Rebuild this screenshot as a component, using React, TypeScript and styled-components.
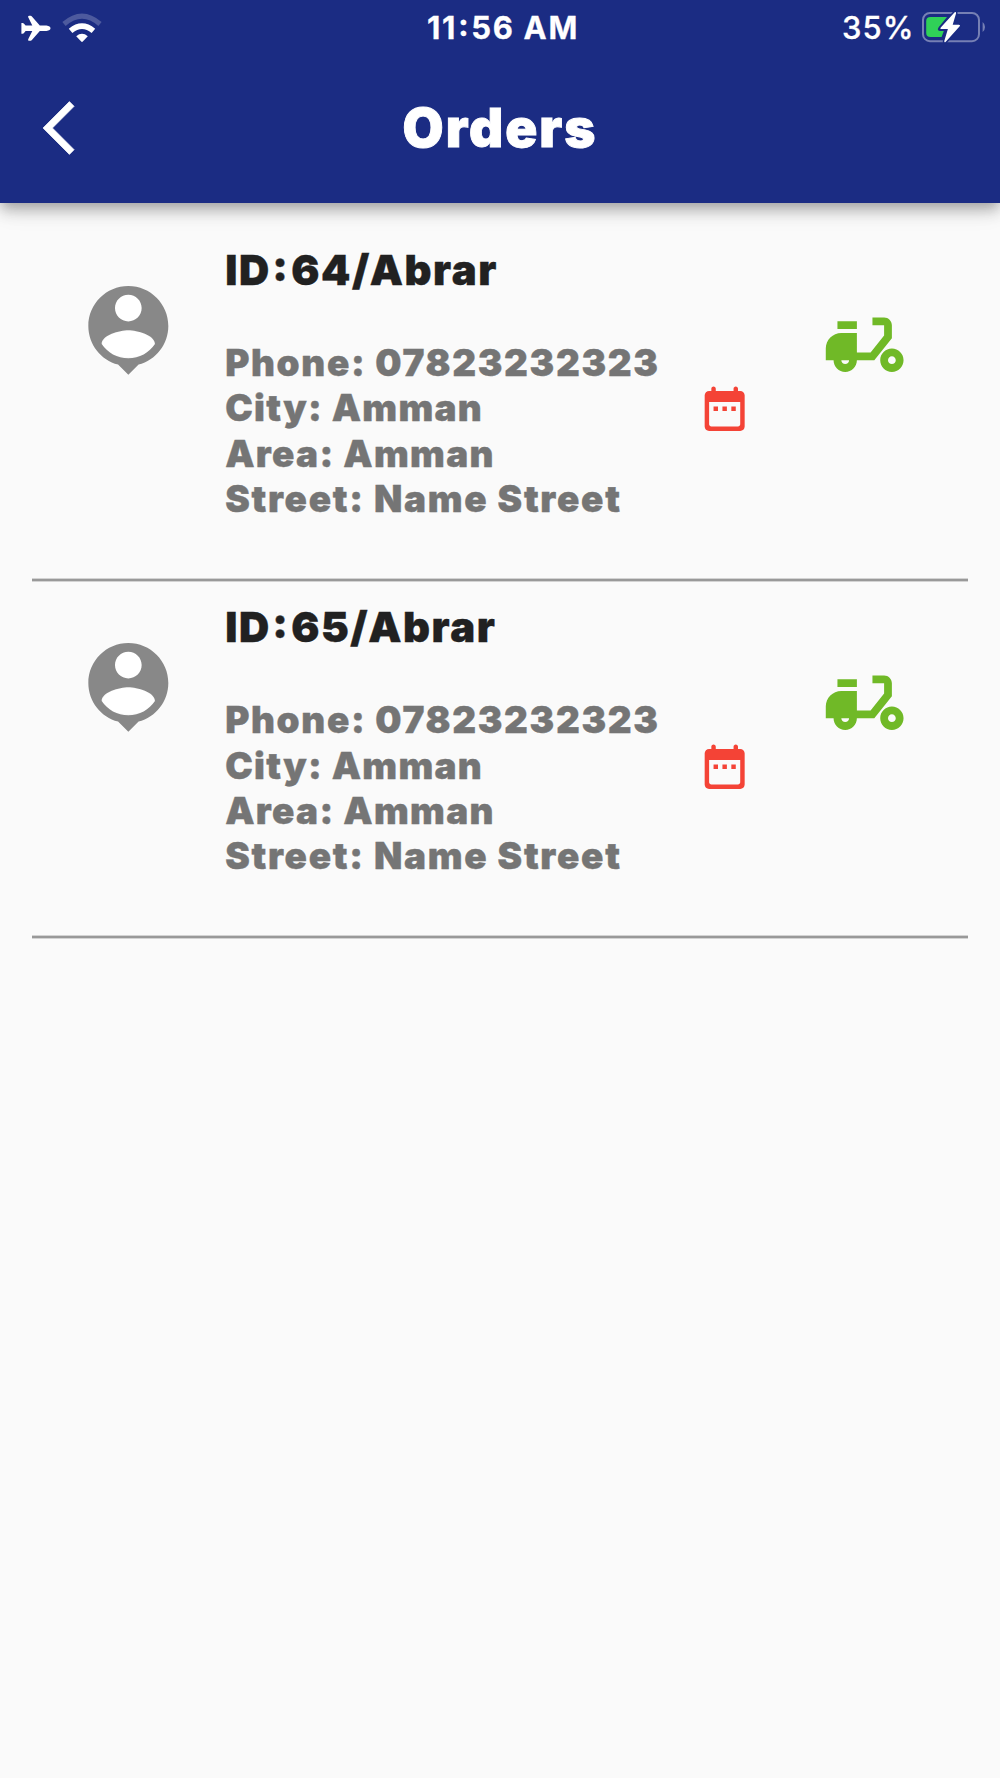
import React from "react";
import styled, { createGlobalStyle } from "styled-components";

const GlobalStyle = createGlobalStyle`
  * { box-sizing: border-box; }
  html, body { margin: 0; background: #fafafa; }
  body { font-family: Inter, "Liberation Sans", sans-serif; }
  svg { display: block; }
`;

const Screen = styled.div`
  width: 1000px;
  height: 1778px;
  display: flex;
  flex-direction: column;
  background: #fafafa;
  overflow: hidden;
`;

const Header = styled.header`
  height: 202.67px;
  flex: none;
  color: #fff;
  background: #1b2c83;
  box-shadow: 0 5px 11px -3px rgba(0, 0, 0, 0.2), 0 10px 13px rgba(0, 0, 0, 0.14),
    0 3px 26px rgba(0, 0, 0, 0.12);
`;

const StatusBar = styled.div`
  height: 53px;
  padding: 0 14px 0 21px;
  display: grid;
  grid-template-columns: 1fr auto 1fr;
  align-items: center;
`;

const StatusGroup = styled.div<{ $end?: boolean }>`
  display: flex;
  align-items: center;
  gap: ${(p) => (p.$end ? 6.5 : 11)}px;
  justify-content: ${(p) => (p.$end ? "flex-end" : "flex-start")};
`;

const Clock = styled.time`
  padding: 1px 1px 0 0;
  font-size: 31px;
  font-weight: 700;
  line-height: 54px;
  letter-spacing: 1.7px;
  -webkit-text-stroke: 0.3px currentColor;
`;

const Percent = styled.span`
  padding-top: 1px;
  font-size: 31px;
  font-weight: 500;
  line-height: 54px;
  letter-spacing: 1px;
  -webkit-text-stroke: 0.3px currentColor;
`;

const RaisedColon = styled.span<{ $gap: number }>`
  margin: 0 ${(p) => p.$gap}px;
  font-feature-settings: "case";
`;

const AppBar = styled.div`
  height: 149.67px;
  padding: 0 42.67px;
  display: grid;
  grid-template-columns: 64px 1fr 64px;
  align-items: center;
`;

const BackButton = styled.button`
  width: 64px;
  height: 64px;
  padding: 0;
  border: 0;
  color: inherit;
  background: none;
`;

const Title = styled.h1`
  margin: 0;
  padding-top: 1px;
  text-align: center;
  font-size: 53px;
  line-height: 64px;
  font-weight: 900;
  letter-spacing: 2px;
  -webkit-text-stroke: 0.9px currentColor;
`;

const OrderList = styled.main`
  padding: 21px 32px 0;
`;

const OrderRow = styled.article`
  height: 357.33px;
  padding-left: 42.67px;
  display: grid;
  grid-template-columns: 150px 473.6px 119.7px 1fr;
  align-items: start;
  border-bottom: 2px solid #999;
  box-shadow: 0 1px #d3d3d3, inset 0 -1px #d3d3d3;
`;

const IconSlot = styled.div<{ $top: number; $color: string }>`
  padding-top: ${(p) => p.$top}px;
  color: ${(p) => p.$color};
`;

const OrderText = styled.div`
  padding: 21.5px 0 0 0.5px;
  font-weight: 900;
  white-space: nowrap;
`;

const OrderName = styled.h2`
  margin: 0 0 44px;
  color: #212121;
  font-size: 41.8px;
  font-weight: inherit;
  line-height: 51px;
  letter-spacing: 1.6px;
  -webkit-text-stroke: 0.4px currentColor;
`;

const Detail = styled.p<{ $tracking: number }>`
  margin: 0;
  color: #757575;
  font-size: 36.9px;
  line-height: 45.33px;
  letter-spacing: ${(p) => p.$tracking}px;
  -webkit-text-stroke: 0.4px currentColor;
`;

interface IconProps {
  size: number;
  path: string;
  weight?: number;
  children?: React.ReactNode;
}

const MaterialIcon = ({ size, path, weight = 0, children }: IconProps) => (
  <svg
    width={size}
    height={size}
    viewBox="0 0 24 24"
    fill="currentColor"
    stroke="currentColor"
    strokeWidth={weight}
    overflow="visible"
    aria-hidden
  >
    {children}
    <path d={path} />
  </svg>
);

const icons = {
  back: "M11.67 3.87L9.9 2.1 0 12l9.9 9.9 1.77-1.77L3.54 12z",
  person:
    "M12 2c-4.97 0-9 4.03-9 9 0 4.17 2.84 7.67 6.69 8.69L12 22l2.31-2.31C18.16 18.67 21 15.17 21 11c0-4.97-4.03-9-9-9zm0 2c1.66 0 3 1.34 3 3s-1.34 3-3 3-3-1.34-3-3 1.34-3 3-3zm0 14.3c-2.5 0-4.71-1.28-6-3.22.03-1.99 4-3.08 6-3.08 1.99 0 5.97 1.09 6 3.08-1.29 1.94-3.5 3.22-6 3.22z",
  calendar:
    "M19 4h-1V3c0-.55-.45-1-1-1s-1 .45-1 1v1H8V3c0-.55-.45-1-1-1s-1 .45-1 1v1H5c-1.11 0-1.99.9-1.99 2L3 20c0 1.1.89 2 2 2h14c1.1 0 2-.9 2-2V6c0-1.1-.9-2-2-2zm0 15c0 .55-.45 1-1 1H6c-.55 0-1-.45-1-1V9h14v10zM7 11h2v2H7zm4 0h2v2h-2zm4 0h2v2h-2z",
  scooter:
    "M19 7c0-1.1-.9-2-2-2h-3v2h3v2.65L13.52 14H10V9H6c-2.21 0-4 1.79-4 4v3h2c0 1.66 1.34 3 3 3s3-1.34 3-3h4.48L19 10.35V7zM7 17c-.55 0-1-.45-1-1h2c0 .55-.45 1-1 1zM5 6h5v2H5zM19 13c-1.66 0-3 1.34-3 3s1.34 3 3 3 3-1.34 3-3-1.34-3-3-3zm0 4c-.55 0-1-.45-1-1s.45-1 1-1 1 .45 1 1-.45 1-1 1z",
};

const Airplane = () => (
  <svg width="30" height="28" viewBox="0 0 30 28" fill="#fff" aria-hidden>
    <path d="M.4 8.9h1.2q.9 0 1.4.8l1.6 1.9h6.7L7.2 3.2Q6.7 1.7 8 1.7h1.6q.8 0 1.3.7l7.9 9.1h6.7q4 .7 4 2.8t-4 2.8h-6.7l-7.9 9q-.5.7-1.3.7H8q-1.3 0-.8-1.5L11.3 17H4.6L3 18.9q-.5.8-1.4.8H.4z" />
  </svg>
);

const Wifi = () => (
  <svg width="40" height="30" viewBox="0 0 40 30" fill="none" aria-hidden>
    <path d="M2 11Q20-4.8 38 11" stroke="#fff" strokeOpacity=".22" strokeWidth="5" />
    <path d="M8.6 17.9Q20 8.4 31.4 17.9" stroke="#fff" strokeWidth="5.6" />
    <path d="M14.2 23.2q5.8-4.8 11.6 0l-5 5.3q-.8.8-1.6 0z" fill="#fff" />
  </svg>
);

const Battery = () => (
  <svg width="65" height="34" viewBox="0 0 65 34" aria-hidden>
    <g transform="translate(0 -0.9)">
      <rect x="2" y="2.9" width="56" height="28.2" rx="7" fill="none" stroke="#fff" strokeOpacity=".4" strokeWidth="2" />
      <path d="M61.6 12q2.4 1.8 2.4 5t-2.4 5z" fill="#fff" fillOpacity=".4" />
      <path d="M9.5 6.8H26l-8.5 10.7q-1.8 3 1.3 3.5h4l-2.2 6H9.5Q5.2 27 5.2 23V11Q5.2 6.8 9.5 6.8z" fill="#30d158" />
      <path
        d="M33.4 2.4L19.8 17.4Q18.7 19 20.6 19h6.3l-3.6 12q-.2 2 1.5.7L38.7 16.2Q39.8 14.7 37.9 14.7h-6.2l3.4-11.5q0-2-1.7-.8z"
        fill="#fff"
        stroke="#1b2c83"
        strokeWidth="3"
        paintOrder="stroke"
      />
    </g>
  </svg>
);

interface Order {
  id: number;
  name: string;
  phone: string;
  city: string;
  area: string;
  street: string;
}

const orders: Order[] = [64, 65].map((id) => ({
  id,
  name: "Abrar",
  phone: "07823232323",
  city: "Amman",
  area: "Amman",
  street: "Name Street",
}));

const OrderItem = ({ order }: { order: Order }) => (
  <OrderRow>
    <IconSlot $top={53.4} $color="#888888">
      <MaterialIcon size={106.67} path={icons.person}>
        <circle cx="12" cy="7" r="3.1" fill="#fff" />
        <ellipse cx="12" cy="15.1" rx="5.8" ry="2.9" fill="#fff" />
      </MaterialIcon>
    </IconSlot>
    <OrderText>
      <OrderName>
        ID<RaisedColon $gap={1.6}>:</RaisedColon>
        {`${order.id}/${order.name}`}
      </OrderName>
      <Detail $tracking={1.65}>{`Phone: ${order.phone}`}</Detail>
      <Detail $tracking={1.3}>{`City: ${order.city}`}</Detail>
      <Detail $tracking={1.35}>{`Area: ${order.area}`}</Detail>
      <Detail $tracking={1.75}>{`Street: ${order.street}`}</Detail>
    </OrderText>
    <IconSlot $top={158.6} $color="#f44336">
      <MaterialIcon size={53.33} path={icons.calendar} />
    </IconSlot>
    <IconSlot $top={74.8} $color="#70b927">
      <MaterialIcon size={93.33} path={icons.scooter} />
    </IconSlot>
  </OrderRow>
);

export default function App() {
  return (
    <Screen>
      <GlobalStyle />
      <Header>
        <StatusBar>
          <StatusGroup>
            <Airplane />
            <Wifi />
          </StatusGroup>
          <Clock>
            11<RaisedColon $gap={1}>:</RaisedColon>56 AM
          </Clock>
          <StatusGroup $end>
            <Percent>35%</Percent>
            <Battery />
          </StatusGroup>
        </StatusBar>
        <AppBar>
          <BackButton aria-label="Back">
            <MaterialIcon size={64} path={icons.back} weight={0.25} />
          </BackButton>
          <Title>Orders</Title>
        </AppBar>
      </Header>
      <OrderList>
        {orders.map((order) => (
          <OrderItem key={order.id} order={order} />
        ))}
      </OrderList>
    </Screen>
  );
}
